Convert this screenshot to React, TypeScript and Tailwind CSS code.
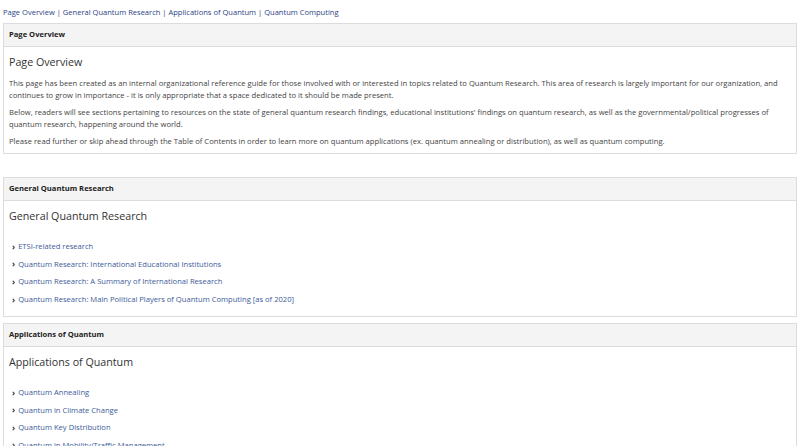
const links = {
  general: [
    'ETSI-related research',
    'Quantum Research: International Educational Institutions',
    'Quantum Research: A Summary of International Research',
    'Quantum Research: Main Political Players of Quantum Computing [as of 2020]',
  ],
  applications: [
    'Quantum Annealing',
    'Quantum in Climate Change',
    'Quantum Key Distribution',
    'Quantum in Mobility/Traffic Management',
    'Quantum in Finance',
  ],
};

function Card({ title, className, children }: { title: string; className?: string; children: React.ReactNode }) {
  return (
    <section className={['border border-[#dcdcdc] bg-white', className ?? ''].join(' ')}>
      <div className="flex h-[23px] items-center border-b border-[#dcdcdc] bg-[#f4f4f4] px-[5px]">
        <h2 className="text-[7.6px] font-bold text-[#222]">{title}</h2>
      </div>
      <div className="px-[5px]">{children}</div>
    </section>
  );
}

function LinkList({ items }: { items: string[] }) {
  return (
    <ul className="mt-[16px] flex flex-col gap-[5.6px] pb-[10px]">
      {items.map((item) => (
        <li key={item} className="flex h-[12px] items-center gap-[3px] pl-[3px] text-[7.6px]">
          <span className="text-[8.5px] font-bold leading-none text-[#333]">›</span>
          <a className="text-[#3c5a9a]">{item}</a>
        </li>
      ))}
    </ul>
  );
}

export default function App() {
  return (
    <div
      className="h-[446px] overflow-hidden bg-white px-[3px] pt-[5px] text-[#444]"
      style={{ fontFamily: '"Open Sans", "Noto Sans", sans-serif' }}
    >
      <nav className="h-[18px] text-[7.55px] leading-[14px] text-[#2b3f86]">
        Page Overview | General Quantum Research | Applications of Quantum | Quantum Computing
      </nav>

      <Card title="Page Overview">
        <h1 className="mt-[6px] text-[10.7px] leading-[18px] text-[#333]">Page Overview</h1>
        <div className="mt-[6px] flex flex-col gap-[5px] pb-[6px] text-[7.65px] leading-[12px] text-[#444]">
          <p>
            This page has been created as an internal organizational reference guide for those involved with or interested in topics related to Quantum Research. This area of research is largely important for our organization, and continues to grow in importance - it is only appropriate that a space dedicated to it should be made present.
          </p>
          <p>
            Below, readers will see sections pertaining to resources on the state of general quantum research findings, educational institutions' findings on quantum research, as well as the governmental/political progresses of quantum research, happening around the world.
          </p>
          <p>
            Please read further or skip ahead through the Table of Contents in order to learn more on quantum applications (ex. quantum annealing or distribution), as well as quantum computing.
          </p>
        </div>
      </Card>

      <Card title="General Quantum Research" className="mt-[23px]">
        <h1 className="mt-[6px] text-[10.7px] leading-[18px] text-[#333]">General Quantum Research</h1>
        <LinkList items={links.general} />
      </Card>

      <Card title="Applications of Quantum" className="mt-[6px]">
        <h1 className="mt-[6px] text-[10.7px] leading-[18px] text-[#333]">Applications of Quantum</h1>
        <LinkList items={links.applications} />
      </Card>
    </div>
  );
}
